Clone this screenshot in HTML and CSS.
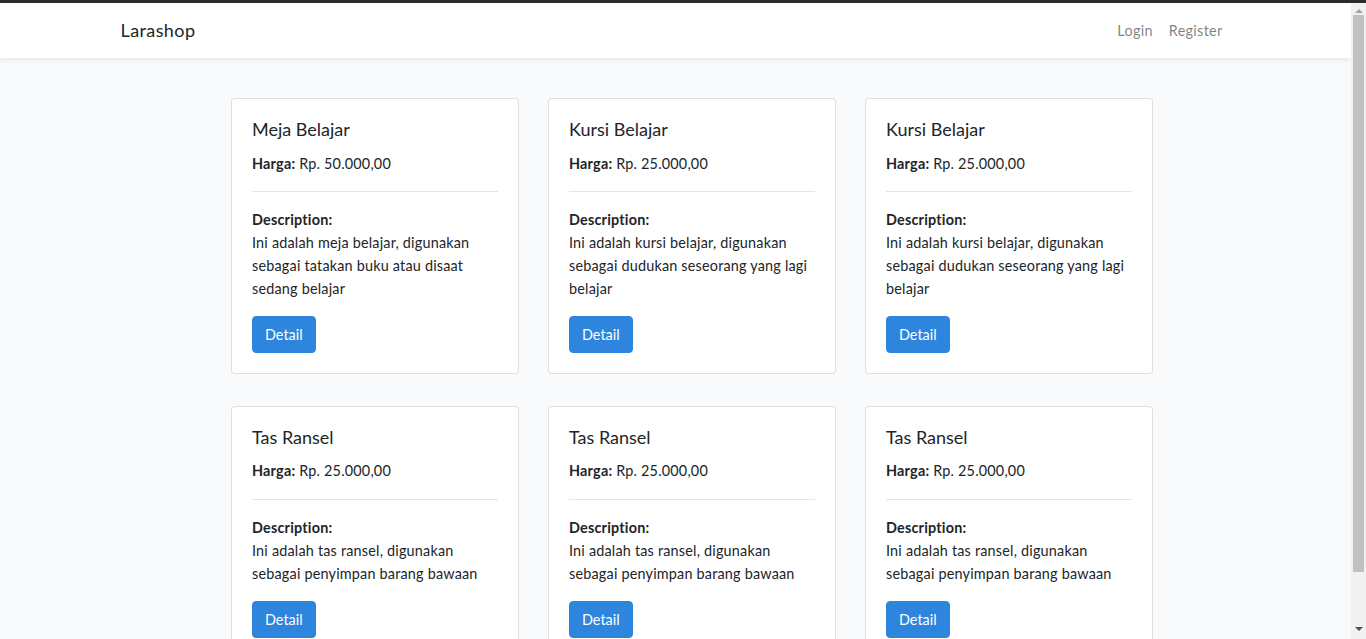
FILE: index.html
```html
<!DOCTYPE html>
<html lang="id">
<head>
<meta charset="utf-8">
<title>Larashop</title>
<link rel="stylesheet" href="styles.css">
</head>
<body>
<div class="topline"></div>
<div class="window">
  <div class="page">
    <nav class="navbar">
      <div class="nav-inner">
        <a class="brand" href="#">Larashop</a>
        <div class="nav-links">
          <a class="nav-link" href="#">Login</a>
          <a class="nav-link" href="#">Register</a>
        </div>
      </div>
    </nav>
    <main class="main">
      <div class="grid">
        <div class="card">
          <h5 class="card-title">Meja Belajar</h5>
          <p class="price"><b>Harga:</b> Rp. 50.000,00</p>
          <hr class="sep">
          <p class="desc"><b>Description:</b><br>Ini adalah meja belajar, digunakan sebagai tatakan buku atau disaat sedang belajar</p>
          <a class="btn" href="#">Detail</a>
        </div>
        <div class="card">
          <h5 class="card-title">Kursi Belajar</h5>
          <p class="price"><b>Harga:</b> Rp. 25.000,00</p>
          <hr class="sep">
          <p class="desc"><b>Description:</b><br>Ini adalah kursi belajar, digunakan sebagai dudukan seseorang yang lagi belajar</p>
          <a class="btn" href="#">Detail</a>
        </div>
        <div class="card">
          <h5 class="card-title">Kursi Belajar</h5>
          <p class="price"><b>Harga:</b> Rp. 25.000,00</p>
          <hr class="sep">
          <p class="desc"><b>Description:</b><br>Ini adalah kursi belajar, digunakan sebagai dudukan seseorang yang lagi belajar</p>
          <a class="btn" href="#">Detail</a>
        </div>
        <div class="card">
          <h5 class="card-title">Tas Ransel</h5>
          <p class="price"><b>Harga:</b> Rp. 25.000,00</p>
          <hr class="sep">
          <p class="desc"><b>Description:</b><br>Ini adalah tas ransel, digunakan sebagai penyimpan barang bawaan</p>
          <a class="btn" href="#">Detail</a>
        </div>
        <div class="card">
          <h5 class="card-title">Tas Ransel</h5>
          <p class="price"><b>Harga:</b> Rp. 25.000,00</p>
          <hr class="sep">
          <p class="desc"><b>Description:</b><br>Ini adalah tas ransel, digunakan sebagai penyimpan barang bawaan</p>
          <a class="btn" href="#">Detail</a>
        </div>
        <div class="card">
          <h5 class="card-title">Tas Ransel</h5>
          <p class="price"><b>Harga:</b> Rp. 25.000,00</p>
          <hr class="sep">
          <p class="desc"><b>Description:</b><br>Ini adalah tas ransel, digunakan sebagai penyimpan barang bawaan</p>
          <a class="btn" href="#">Detail</a>
        </div>
      </div>
    </main>
  </div>
  <div class="scrollbar">
    <div class="arrow arrow-up"></div>
    <div class="thumb"></div>
    <div class="arrow arrow-down"></div>
  </div>
</div>
</body>
</html>
```
FILE: styles.css
```css
* { box-sizing: border-box; }
html, body { margin: 0; padding: 0; height: 639px; overflow: hidden; }
body {
  font-family: Lato, "Noto Sans", sans-serif;
  font-size: 14.4px;
  line-height: 1.6;
  letter-spacing: 0.2px;
  color: #212529;
  background: #f8fafc;
  display: flex;
  flex-direction: column;
}
.topline { height: 3px; background: #2b2b2b; flex: none; }
.window { flex: 1; display: flex; min-height: 0; }
.page { flex: 1; min-width: 0; overflow: hidden; background: #f8fafc; }
.navbar {
  background: #fff;
  height: 55px;
  box-shadow: 0 2px 4px rgba(0,0,0,.075);
  position: relative;
  z-index: 1;
}
.nav-inner {
  width: 1140px;
  margin: 0 auto;
  padding: 0 15px;
  height: 100%;
  display: flex;
  align-items: center;
  justify-content: space-between;
}
.brand { font-size: 18px; letter-spacing: 0.4px; color: #212529; text-decoration: none; }
.nav-links { display: flex; }
.nav-link { color: rgba(0,0,0,.5); text-decoration: none; padding: 0 8px; letter-spacing: 0.3px; }
.main { padding: 40px 0 0 231px; }
.grid {
  width: 922px;
  display: grid;
  grid-template-columns: repeat(3, 288px);
  column-gap: 29px;
  row-gap: 32px;
}
.card {
  background: #fff;
  border: 1px solid rgba(0,0,0,.125);
  border-radius: 4px;
  padding: 20px;
}
.card-title { font-size: 18px; font-weight: 400; line-height: 1.2; letter-spacing: 0; margin: 0 0 11px; }
.price { margin: 0 0 16px; }
.sep { border: 0; border-top: 1px solid rgba(0,0,0,.1); margin: 0 0 16px; }
.desc { margin: 0 0 16px; }
b { font-weight: 700; }
.btn {
  display: inline-block;
  background: #2d85dd;
  color: #fff;
  text-decoration: none;
  padding: 6px 12px;
  border: 1px solid #2d85dd;
  border-radius: 4px;
  letter-spacing: 0;
}
.scrollbar {
  width: 15px;
  flex: none;
  background: #f1f1f1;
  display: flex;
  flex-direction: column;
  align-items: center;
}
.arrow { width: 0; height: 0; border-left: 4px solid transparent; border-right: 4px solid transparent; }
.arrow-up { border-bottom: 4px solid #a3a3a3; margin: 6px 0 2px; }
.arrow-down { border-top: 4px solid #505050; margin: 55px 0 0; }
.thumb { width: 11px; height: 557px; background: #c1c1c1; }
```
